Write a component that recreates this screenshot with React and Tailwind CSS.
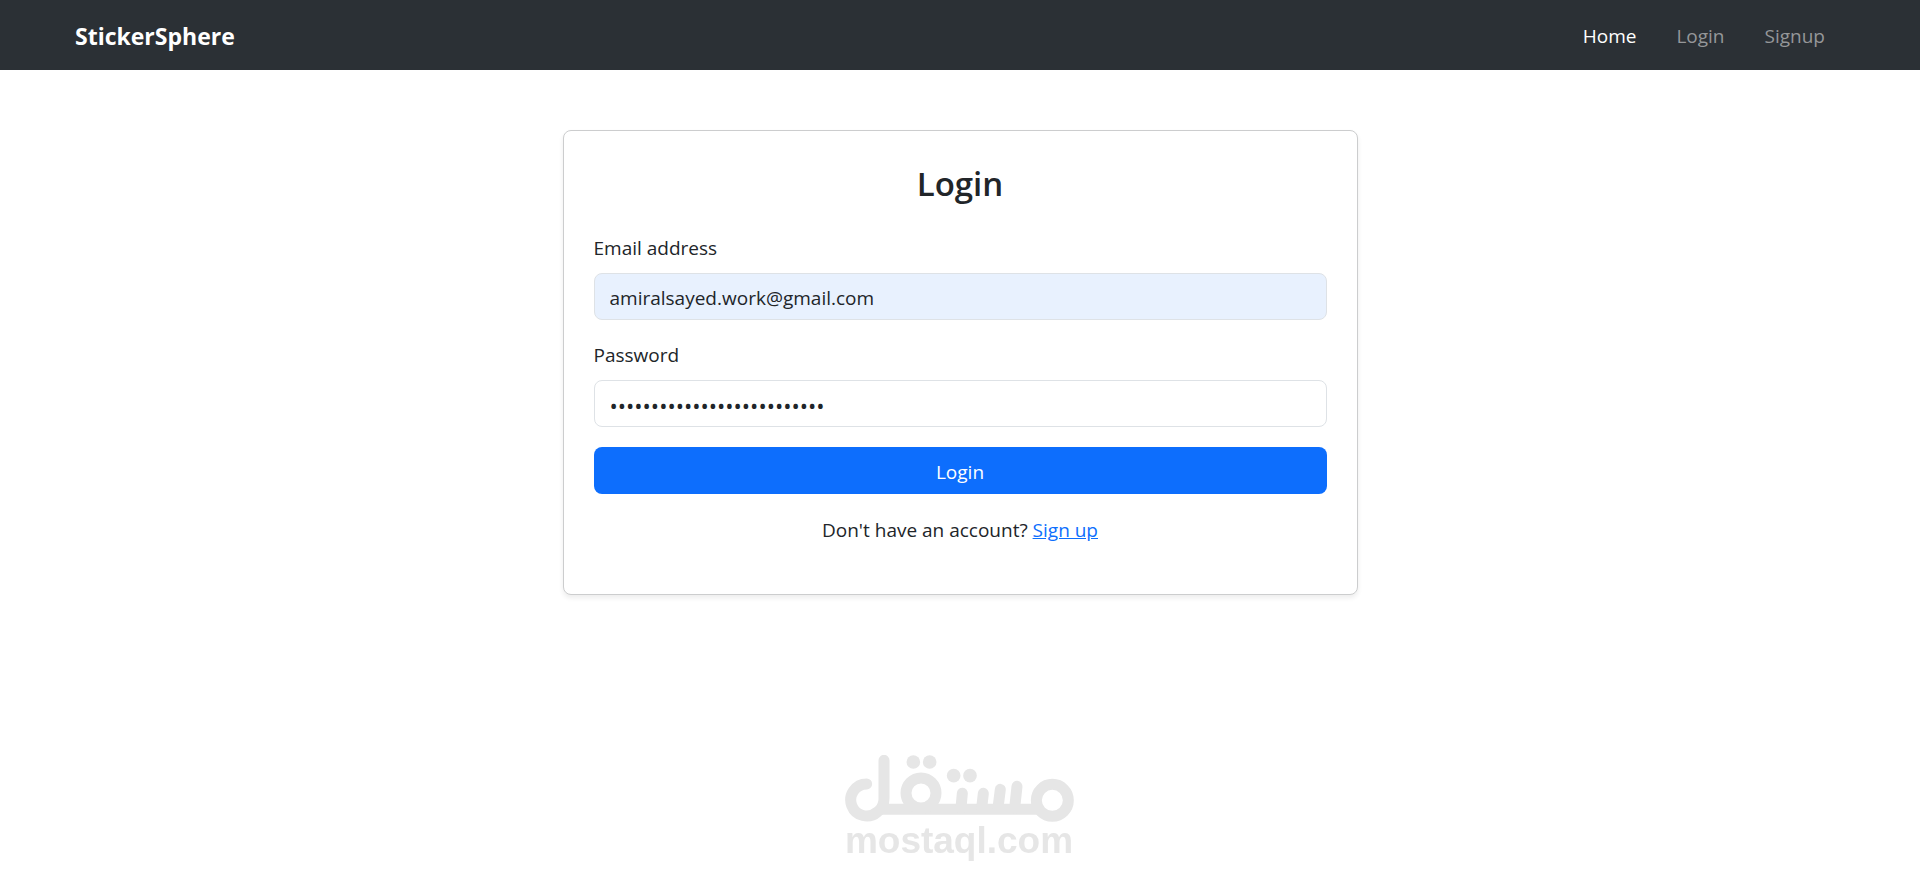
import { useState } from 'react'
import { clsx } from 'clsx'

const NAV_LINKS = [
  { label: 'Home', href: '#home', active: true },
  { label: 'Login', href: '#login' },
  { label: 'Signup', href: '#signup' },
]

const Navbar = () => (
  <nav className="bg-[#2b3035] h-[70px] px-[75px] pt-px flex items-center justify-between">
    <a href="#home" className="text-white font-bold text-[23px] leading-[38px]">StickerSphere</a>
    <ul className="flex items-center">
      {NAV_LINKS.map(({ label, href, active }) => (
        <li key={label}>
          <a href={href} className={clsx('block px-5 py-2.5', active ? 'text-white' : 'text-[#959799]')}>
            {label}
          </a>
        </li>
      ))}
    </ul>
  </nav>
)

const Field = ({ id, label, className, ...props }) => (
  <div className="mb-5">
    <label htmlFor={id} className="block mb-2.5">{label}</label>
    <input
      id={id}
      className={clsx('block w-full h-[47px] px-[15px] pt-0.5 border border-[#dee2e6] rounded-lg outline-none', className)}
      {...props}
    />
  </div>
)

const LoginCard = () => {
  const [email, setEmail] = useState('amiralsayed.work@gmail.com')
  const [password, setPassword] = useState('abcdefghijklmnopqrstuvwxyz')

  return (
    <div className="w-full max-w-[795px] bg-white border border-[#cccdce] rounded-lg p-[30px] shadow-[0_3px_5px_rgba(0,0,0,0.075)]">
      <h2 className="text-center text-[33px] leading-[42px] font-semibold pt-0.5 mb-7">Login</h2>
      <form onSubmit={(e) => e.preventDefault()}>
        <Field
          id="email"
          label="Email address"
          type="email"
          value={email}
          onChange={(e) => setEmail(e.target.value)}
          className="bg-[#e8f1fe]"
        />
        <Field
          id="password"
          label="Password"
          type="password"
          value={password}
          onChange={(e) => setPassword(e.target.value)}
          className="bg-white text-[22px]"
        />
        <button type="submit" className="block w-full h-[47px] pt-0.5 rounded-lg bg-[#0d6efd] text-white">
          Login
        </button>
      </form>
      <p className="text-center pt-[21px] pb-[19px]">
        Don't have an account? <a href="#signup" className="text-[#0d6efd] underline">Sign up</a>
      </p>
    </div>
  )
}

const Watermark = () => (
  <div className="fixed bottom-[19px] inset-x-0 pr-0.5 flex flex-col items-center text-[#e6e6e6] pointer-events-none">
    <svg width="229" height="67" viewBox="45 45 687 201" fill="none" stroke="currentColor" strokeWidth="33" aria-hidden="true">
      {/* lam */}
      <path d="M110 132A48 48 0 1 0 142 216Q162 202 162 176V61" strokeLinecap="round" />
      {/* base line */}
      <path d="M142 208H632" />
      {/* qaf */}
      <circle cx="273" cy="159" r="45" />
      {/* teeth */}
      <path d="M397 160L393 204M460 160L455 204M511 148L504 204M561 139L554 204" strokeLinecap="round" />
      {/* meem */}
      <circle cx="667" cy="181" r="48" />
      <g fill="currentColor" stroke="none">
        <circle cx="250" cy="66" r="20.5" />
        <circle cx="299" cy="66" r="20.5" />
        <circle cx="371" cy="107" r="20.5" />
        <circle cx="420" cy="107" r="20.5" />
      </g>
    </svg>
    <span className="font-['Liberation_Sans',Arial,sans-serif] font-bold text-[37px] leading-[37px]">mostaql.com</span>
  </div>
)

export default function App() {
  return (
    <div className="min-h-screen bg-white text-[#212529] font-['Open_Sans','Noto_Sans',sans-serif] text-[19px] leading-[30px]">
      <Navbar />
      <main className="flex justify-center px-4 pt-[60px]">
        <LoginCard />
      </main>
      <Watermark />
    </div>
  )
}
